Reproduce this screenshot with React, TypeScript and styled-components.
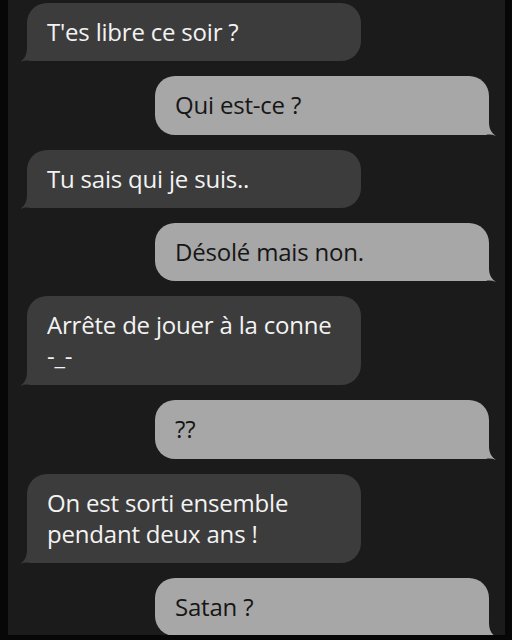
import styled, { createGlobalStyle } from "styled-components";

type Message = {
  from: "them" | "me";
  text: string[];
};

const messages: Message[] = [
  { from: "them", text: ["T'es libre ce soir ?"] },
  { from: "me", text: ["Qui est-ce ?"] },
  { from: "them", text: ["Tu sais qui je suis.."] },
  { from: "me", text: ["Désolé mais non."] },
  { from: "them", text: ["Arrête de jouer à la conne", "-_-"] },
  { from: "me", text: ["??"] },
  { from: "them", text: ["On est sorti ensemble", "pendant deux ans !"] },
  { from: "me", text: ["Satan ?"] },
];

const Tail = ({ side }: { side: "them" | "me" }) => (
  <TailSvg $side={side} width="18" height="14" viewBox="0 0 18 14">
    <path d="M7 0 L18 0 L18 13 L10 13 C7 12.2 3.5 12.6 0 14 C4.5 11 7 7 7 0 Z" />
  </TailSvg>
);

const App = () => {
  return (
    <>
      <GlobalStyle />
      <Frame>
        <Thread>
          {messages.map((m, i) => (
            <Bubble key={i} $side={m.from}>
              {m.text.map((line, j) => (
                <Line key={j}>{line}</Line>
              ))}
              <Tail side={m.from} />
            </Bubble>
          ))}
        </Thread>
      </Frame>
    </>
  );
};

const GlobalStyle = createGlobalStyle`
  html, body {
    margin: 0;
    padding: 0;
    background: #070707;
  }
  body {
    font-family: "Open Sans", "Noto Sans", sans-serif;
  }
`;

const Frame = styled.div`
  width: 512px;
  height: 640px;
  box-sizing: border-box;
  padding: 0 7px 5px 8px;
  background: #070707;
  overflow: hidden;
`;

const Thread = styled.div`
  height: 100%;
  background: #1b1b1b;
  display: flex;
  flex-direction: column;
  gap: 15px;
  padding: 3px 16px 0 19px;
  box-sizing: border-box;
  overflow: hidden;
`;

const Bubble = styled.div<{ $side: "them" | "me" }>`
  position: relative;
  flex-shrink: 0;
  width: 334px;
  box-sizing: border-box;
  padding: 13px 20px 14.3px;
  border-radius: ${(p) => (p.$side === "them" ? "20px 20px 20px 6px" : "20px 20px 6px 20px")};
  align-self: ${(p) => (p.$side === "them" ? "flex-start" : "flex-end")};
  background: ${(p) => (p.$side === "them" ? "#3c3c3c" : "#a7a7a7")};
  color: ${(p) => (p.$side === "them" ? "#f3f3f3" : "#161616")};
  fill: ${(p) => (p.$side === "them" ? "#3c3c3c" : "#a7a7a7")};
`;

const Line = styled.div`
  font-size: 24px;
  font-weight: 500;
  line-height: 31px;
  letter-spacing: -0.2px;
  white-space: nowrap;
`;

const TailSvg = styled.svg<{ $side: "them" | "me" }>`
  position: absolute;
  bottom: -1px;
  ${(p) => (p.$side === "them" ? "left: -7px;" : "right: -7px; transform: scaleX(-1);")}
`;

export default App;
